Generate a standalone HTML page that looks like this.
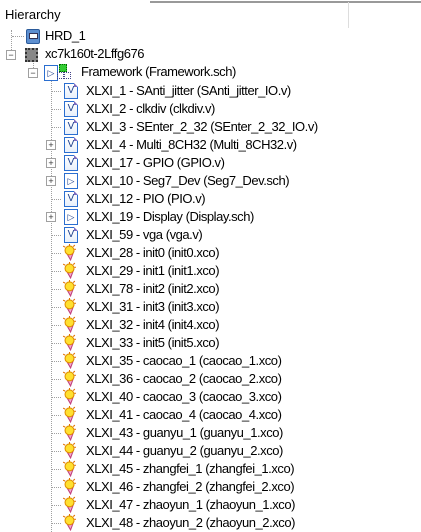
<!DOCTYPE html><html><head><meta charset="utf-8"><style>
body{margin:0;width:421px;height:532px;background:#fff;position:relative;overflow:hidden;font-family:"Liberation Sans","Microsoft YaHei",sans-serif;font-size:13px;color:#000}
.a{position:absolute}
.t{position:absolute;white-space:nowrap;line-height:18px;letter-spacing:-0.45px}
.vl{position:absolute;border-left:1px dotted #a0a0a0;width:0}
.hl{position:absolute;border-top:1px dotted #a0a0a0;height:0}
.box{position:absolute;width:8px;height:8px;border:1px solid #a0a0a0;background:#fff;font-size:9px;line-height:8px;text-align:center;color:#333}
.vi{position:absolute;width:12px;height:14px;border:1px solid #2a6ed0;background:linear-gradient(#fff,#e8f0fb);font-size:10px;line-height:14px;text-align:center;color:#1a3d8a}
.vi:after{content:"";position:absolute;right:-1px;top:-1px;border-top:4px solid #fff;border-left:4px solid #7a6cc0}
.si{position:absolute;width:12px;height:14px;border:1px solid #2a6ed0;background:#fff;font-size:9px;line-height:14px;text-align:center;color:#1a3d8a}
.co{position:absolute;width:15px;height:17px}
</style></head><body>
<div class="a" style="left:150px;top:1px;width:271px;height:2px;background:#999"></div>
<div class="a" style="left:348px;top:2px;width:1px;height:26px;background:#ddd"></div>
<div class="t" style="left:5px;top:6px;letter-spacing:0">Hierarchy</div>

<div class="vl" style="left:11px;top:30px;height:20px"></div>
<div class="hl" style="left:12px;top:36px;width:12px"></div>
<div class="a" style="left:26px;top:29px;width:12px;height:13px;background:#5d8fd0;border:1px solid #2a5a9a;border-radius:2px"><div class="a" style="left:2px;top:3px;width:7px;height:4px;background:#fff;border:1px solid #335"></div></div>
<div class="t" style="left:45px;top:27px">HRD_1</div>

<div class="box" style="left:6px;top:50px">−</div>
<div class="a" style="left:25px;top:48px;width:9px;height:10px;border:2px dotted #333;background:#888"></div>
<div class="t" style="left:45px;top:45px">xc7k160t-2Lffg676</div>

<div class="vl" style="left:33px;top:63px;height:5px"></div>
<div class="box" style="left:28px;top:68px">−</div>
<div class="si" style="left:44px;top:65px">▷</div>
<div class="a" style="left:59px;top:64px;width:6px;height:6px;background:#3c3;border:1px dotted #060"></div>
<div class="a" style="left:57px;top:72px;width:5px;height:5px;border:1px dotted #448"></div>
<div class="a" style="left:64px;top:72px;width:5px;height:5px;border:1px dotted #448"></div>
<div class="t" style="left:81px;top:63px">Framework (Framework.sch)</div>

<div class="vl" style="left:51px;top:81px;height:451px"></div>
<div id="rows"></div>
<script>
var items=[["v","XLXI_1 - SAnti_jitter (SAnti_jitter_IO.v)",0],["v","XLXI_2 - clkdiv (clkdiv.v)",0],["v","XLXI_3 - SEnter_2_32 (SEnter_2_32_IO.v)",0],["v","XLXI_4 - Multi_8CH32 (Multi_8CH32.v)",1],["v","XLXI_17 - GPIO (GPIO.v)",1],["s","XLXI_10 - Seg7_Dev (Seg7_Dev.sch)",1],["v","XLXI_12 - PIO (PIO.v)",0],["s","XLXI_19 - Display (Display.sch)",1],["v","XLXI_59 - vga (vga.v)",0]];
var c=["XLXI_28 - init0 (init0.xco)","XLXI_29 - init1 (init1.xco)","XLXI_78 - init2 (init2.xco)","XLXI_31 - init3 (init3.xco)","XLXI_32 - init4 (init4.xco)","XLXI_33 - init5 (init5.xco)","XLXI_35 - caocao_1 (caocao_1.xco)","XLXI_36 - caocao_2 (caocao_2.xco)","XLXI_40 - caocao_3 (caocao_3.xco)","XLXI_41 - caocao_4 (caocao_4.xco)","XLXI_43 - guanyu_1 (guanyu_1.xco)","XLXI_44 - guanyu_2 (guanyu_2.xco)","XLXI_45 - zhangfei_1 (zhangfei_1.xco)","XLXI_46 - zhangfei_2 (zhangfei_2.xco)","XLXI_47 - zhaoyun_1 (zhaoyun_1.xco)","XLXI_48 - zhaoyun_2 (zhaoyun_2.xco)"];
c.forEach(function(x){items.push(["c",x,0])});
var h="";
items.forEach(function(it,i){var cy=91+18*i,top=cy-9;
 if(it[2])h+='<div class="box" style="left:46px;top:'+(cy-5)+'px">+</div>';
 else h+='<div class="hl" style="left:52px;top:'+cy+'px;width:9px"></div>';
 if(it[0]=="v")h+='<div class="vi" style="left:64px;top:'+(cy-8)+'px">V</div>';
 else if(it[0]=="s")h+='<div class="si" style="left:64px;top:'+(cy-8)+'px">▷</div>';
 else h+='<svg class="co" style="left:62px;top:'+(cy-9)+'px" viewBox="0 0 14 16"><path d="M4 8 L8 15 L11 7 Z" fill="#f4a8d0" stroke="#c0407a" stroke-width="1"/><circle cx="7" cy="6" r="4.2" fill="#ffe030" stroke="#e09000" stroke-width="1"/><path d="M1 2l2 1M7 0v1.5M12 1l-1.5 1.5M13 5h-1.5" stroke="#e07000"/></svg>';
 h+='<div class="t" style="left:86px;top:'+top+'px">'+it[1]+'</div>';});
document.getElementById("rows").innerHTML=h;
</script>
</body></html>
